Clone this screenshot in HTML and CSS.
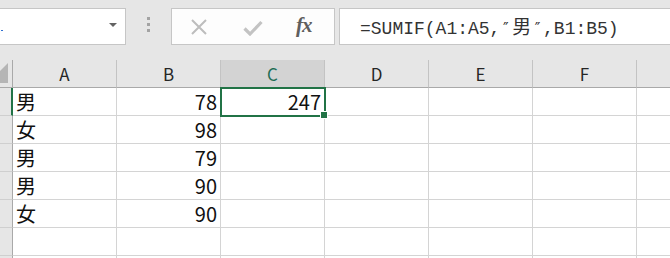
FILE: index.html
```html
<!DOCTYPE html>
<html lang="ja">
<head>
<meta charset="utf-8">
<link rel="stylesheet" href="styles.css">
</head>
<body>
<div class="app">
  <div class="toolbar">
    <div class="namebox"><span class="mark"></span><span class="caret"></span></div>
    <div class="grip"><i></i><i></i><i></i></div>
    <div class="fxbox">
      <svg class="ico-x" width="18" height="16" viewBox="0 0 18 16"><path d="M2 1 L16 15 M16 1 L2 15" stroke="#bdbdbd" stroke-width="2" fill="none"/></svg>
      <svg class="ico-ok" width="20" height="16" viewBox="0 0 20 16"><path d="M1.5 8.5 L7 14 L18.5 2" stroke="#c3c3c3" stroke-width="3.2" fill="none"/></svg>
      <span class="fx">fx</span>
    </div>
    <div class="formula">=SUMIF(A1:A5,<span class="q">″</span><span class="cjk">男</span><span class="q">″</span>,B1:B5)</div>
  </div>
  <div class="sheet">
    <div class="hd corner"><svg width="12" height="27" viewBox="0 0 12 27"><polygon points="8,3 8,23 -12,23" fill="#b5b5b5"/></svg></div>
    <div class="hd col">A</div>
    <div class="hd col">B</div>
    <div class="hd col selcol">C</div>
    <div class="hd col">D</div>
    <div class="hd col">E</div>
    <div class="hd col">F</div>
    <div class="hd col last"></div>

    <div class="rh selrow"></div>
    <div class="c t">男</div><div class="c n">78</div><div class="c n active">247<span class="selbox"></span><span class="handle"></span></div><div class="c"></div><div class="c"></div><div class="c"></div><div class="c last"></div>

    <div class="rh"></div>
    <div class="c t">女</div><div class="c n">98</div><div class="c"></div><div class="c"></div><div class="c"></div><div class="c"></div><div class="c last"></div>

    <div class="rh"></div>
    <div class="c t">男</div><div class="c n">79</div><div class="c"></div><div class="c"></div><div class="c"></div><div class="c"></div><div class="c last"></div>

    <div class="rh"></div>
    <div class="c t">男</div><div class="c n">90</div><div class="c"></div><div class="c"></div><div class="c"></div><div class="c"></div><div class="c last"></div>

    <div class="rh"></div>
    <div class="c t">女</div><div class="c n">90</div><div class="c"></div><div class="c"></div><div class="c"></div><div class="c"></div><div class="c last"></div>

    <div class="rh"></div>
    <div class="c"></div><div class="c"></div><div class="c"></div><div class="c"></div><div class="c"></div><div class="c"></div><div class="c last"></div>

    <div class="rh"></div>
    <div class="c"></div><div class="c"></div><div class="c"></div><div class="c"></div><div class="c"></div><div class="c"></div><div class="c last"></div>
  </div>
</div>
</body>
</html>
```

FILE: styles.css
```css
* { box-sizing: border-box; }
html, body { margin: 0; padding: 0; }
body {
  background: #e6e6e6;
  width: 670px;
  height: 258px;
  overflow: hidden;
  font-family: "Noto Sans CJK JP", "Noto Sans", sans-serif;
  color: #222;
}
.app { width: 670px; height: 258px; overflow: hidden; }

.toolbar {
  display: flex;
  align-items: flex-start;
  padding-top: 8px;
  height: 60px;
}
.namebox {
  margin-left: -10px;
  width: 136px;
  height: 37px;
  background: #fff;
  border: 1px solid #c6c6c6;
  position: relative;
  display: flex;
  align-items: center;
  justify-content: flex-end;
  padding-right: 8px;
  padding-bottom: 1px;
}
.mark {
  position: absolute;
  left: 10px;
  top: 21px;
  width: 2px;
  height: 1px;
  background: #2f6fd0;
}
.caret {
  width: 0; height: 0;
  border-left: 4px solid transparent;
  border-right: 4px solid transparent;
  border-top: 4px solid #636363;
  margin-top: -2px;
}
.grip {
  width: 45px;
  height: 37px;
  display: flex;
  flex-direction: column;
  align-items: center;
  padding-top: 9px;
  gap: 3px;
}
.grip i {
  display: block;
  width: 3px;
  height: 3px;
  background: #a3a3a3;
}
.fxbox {
  width: 164px;
  height: 37px;
  background: #fdfdfd;
  border: 1px solid #c6c6c6;
  display: flex;
  align-items: center;
  position: relative;
}
.ico-x { margin-left: 18px; margin-top: 1px; }
.ico-ok { margin-left: 35px; margin-top: 2px; }
.fx {
  margin-left: 33px;
  font-family: "Liberation Serif", "DejaVu Serif", serif;
  font-style: italic;
  font-weight: bold;
  font-size: 21px;
  color: #5f5f5f;
  letter-spacing: -1px;
  margin-top: -2px;
}
.formula {
  margin-left: 4px;
  flex: 1;
  height: 37px;
  background: #fff;
  border: 1px solid #c6c6c6;
  border-right: none;
  padding-left: 20px;
  padding-top: 7px;
  font-family: "Liberation Mono", "DejaVu Sans Mono", monospace;
  font-size: 18px;
  line-height: 20px;
  color: #333;
  white-space: nowrap;
}
.formula .q {
  display: inline-block;
  width: 10.8px;
  text-align: center;
  font-family: "DejaVu Sans", sans-serif;
  font-size: 15px;
}
.formula .cjk {
  font-family: "Noto Sans CJK JP", sans-serif;
  font-size: 19px;
  margin: 0 1px;
}

.sheet {
  display: grid;
  grid-template-columns: 13px repeat(6, 104px) 1fr;
  grid-auto-rows: 28px;
}
.hd {
  background: #e6e6e6;
  border-bottom: 1px solid #a9a9a9;
  border-right: 1px solid #c3c3c3;
  font-size: 17px;
  line-height: 26px;
  padding-top: 1px;
  text-align: center;
  color: #262626;
}
.corner { overflow: hidden; border-right-color: #a9a9a9; }
.corner svg { display: block; margin-top: -1px; }
.selcol {
  background: #d3d3d3;
  color: #1f6e55;
  border-bottom-color: #217346;
}
.hd.last { border-right: none; }
.rh {
  background: #e6e6e6;
  border-right: 1px solid #a9a9a9;
  border-bottom: 1px solid #cfcfcf;
}
.rh.selrow {
  border-right: 2px solid #217346;
}
.c {
  background: #fff;
  border-right: 1px solid #d4d4d4;
  border-bottom: 1px solid #d4d4d4;
  font-size: 20px;
  line-height: 28px;
  white-space: nowrap;
  color: #111;
}
.c.last { border-right: none; }
.c.t { padding-left: 3px; }
.c.n { text-align: right; padding-right: 3px; }
.active { position: relative; }
.selbox {
  position: absolute;
  left: -1px;
  top: -1px;
  width: 106px;
  height: 30px;
  border: 2px solid #217346;
}
.handle {
  position: absolute;
  left: 99px;
  top: 23px;
  width: 8px;
  height: 8px;
  background: #217346;
  border: 1px solid #fff;
}
```
